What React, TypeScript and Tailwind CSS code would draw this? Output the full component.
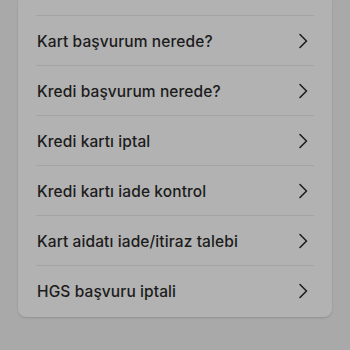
const items = [
  'Kart başvurum nerede?',
  'Kredi başvurum nerede?',
  'Kredi kartı iptal',
  'Kredi kartı iade kontrol',
  'Kart aidatı iade/itiraz talebi',
  'HGS başvuru iptali',
];

const Chevron = () => (
  <svg width="10" height="16" viewBox="0 0 10 16" fill="none" className="shrink-0">
    <path d="M2 1.5 L8.5 8 L2 14.5" stroke="#1f1f1f" strokeWidth="1.6" strokeLinecap="round" strokeLinejoin="round" />
  </svg>
);

export default function App() {
  return (
    <div className="h-[350px] w-[350px] overflow-hidden bg-[#a9a9a9]" style={{ fontFamily: 'Inter, "Noto Sans", sans-serif' }}>
      <div className="mx-[18px] rounded-b-lg bg-[#b2b2b2] px-[18px] shadow-[0_1px_2px_rgba(0,0,0,0.15)]">
        <div className="h-[15px]" />
        {items.map((label) => (
          <div key={label} className="flex h-[50px] items-center justify-between border-t border-[#a4a4a4] pl-[1px] pr-[6px]">
            <span className="pt-[2px] text-[15.5px] font-medium tracking-[0.1px] text-[#1c1c1c]">{label}</span>
            <Chevron />
          </div>
        ))}
        <div className="h-[2px]" />
      </div>
    </div>
  );
}
